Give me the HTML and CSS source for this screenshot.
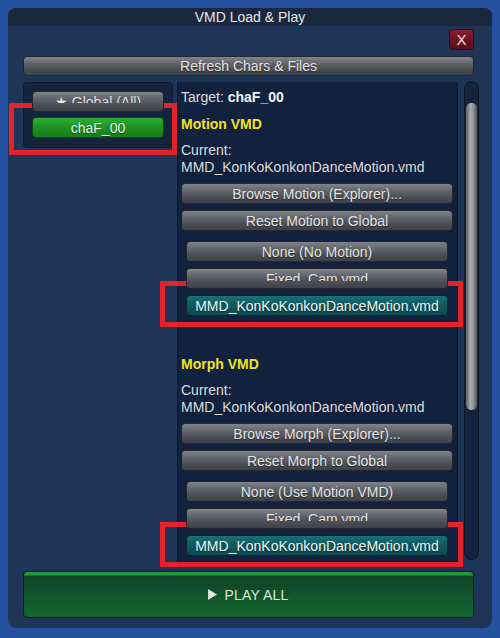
FILE: index.html
```html
<!DOCTYPE html>
<html>
<head>
<meta charset="utf-8">
<link rel="stylesheet" href="styles.css">
</head>
<body>
<div class="window">
  <div class="titlebar">VMD Load &amp; Play</div>
  <div class="close-row"><div class="btn-close">X</div></div>
  <div class="btn btn-refresh">Refresh Chars &amp; Files</div>
  <div class="main">
    <div class="left-panel">
      <div class="btn btn-global"><span class="clip clip12">★ Global (All)</span></div>
      <div class="btn btn-green">chaF_00</div>
    </div>
    <div class="right-panel">
      <div class="line">Target: <b class="strong">chaF_00</b></div>
      <div class="line heading">Motion VMD</div>
      <div class="line current">Current:</div>
      <div class="line">MMD_KonKoKonkonDanceMotion.vmd</div>
      <div class="btn btn-wide first">Browse Motion (Explorer)...</div>
      <div class="btn btn-wide">Reset Motion to Global</div>
      <div class="btn btn-item first-item">None (No Motion)</div>
      <div class="btn btn-item"><span class="clip clip13">Fixed_Cam.vmd</span></div>
      <div class="btn btn-item btn-teal">MMD_KonKoKonkonDanceMotion.vmd</div>

      <div class="line heading section">Morph VMD</div>
      <div class="line current">Current:</div>
      <div class="line">MMD_KonKoKonkonDanceMotion.vmd</div>
      <div class="btn btn-wide first">Browse Morph (Explorer)...</div>
      <div class="btn btn-wide">Reset Morph to Global</div>
      <div class="btn btn-item first-item">None (Use Motion VMD)</div>
      <div class="btn btn-item"><span class="clip clip13">Fixed_Cam.vmd</span></div>
      <div class="btn btn-item btn-teal">MMD_KonKoKonkonDanceMotion.vmd</div>
    </div>
    <div class="scroll-track"><div class="scroll-thumb"></div></div>
  </div>
  <div class="btn-play">
    <svg class="play-icon" width="9" height="11" viewBox="0 0 9 11"><path d="M0 0 L9 5.5 L0 11 Z" fill="#dfe8df"/></svg>
    <span>PLAY ALL</span>
  </div>
  <div class="mark mark-1"></div>
  <div class="mark mark-2"></div>
  <div class="mark mark-3"></div>
</div>
</body>
</html>
```

FILE: styles.css
```css
* { box-sizing: border-box; }
html, body { margin: 0; padding: 0; }
body {
  background: #2452a0;
  width: 500px;
  height: 638px;
  overflow: hidden;
  font-family: "Liberation Sans", Arial, sans-serif;
  font-size: 14px;
  color: #e2e2e2;
}
.window {
  position: relative;
  margin: 8px 0 0 8px;
  width: 484px;
  height: 620px;
  background: #1f3558;
  border-radius: 8px;
  padding: 0 18px 10px 15px;
  display: flex;
  flex-direction: column;
}
.titlebar {
  margin: 0 -18px 0 -15px;
  height: 18px;
  line-height: 18px;
  text-align: center;
  background: #1a283e;
  border-radius: 8px 8px 0 0;
  color: #e6e6e6;
}
.close-row {
  display: flex;
  justify-content: flex-end;
  margin-top: 3px;
  height: 21px;
}
.btn-close {
  width: 25px;
  height: 21px;
  line-height: 20px;
  text-align: center;
  color: #f0dde0;
  font-size: 15px;
  background: linear-gradient(#8a1e30, #6a1222 55%, #5a0e1c);
  border: 1px solid #3a0812;
  border-radius: 4px;
}
.btn {
  position: relative;
  z-index: 2;
  height: 21px;
  line-height: 20px;
  text-align: center;
  white-space: nowrap;
  color: #e4e4e4;
  text-shadow: 0 1px 1px rgba(0,0,0,0.45);
  background: linear-gradient(#80848a, #62666c 35%, #4a4e54 70%, #3e4247);
  border: 1px solid #23262b;
  border-radius: 4px;
  overflow: hidden;
}
.btn-refresh {
  margin-top: 6px;
  height: 20px;
  line-height: 18px;
}
.clip {
  display: block;
  overflow: hidden;
}
.clip12 { height: 11px; }
.clip13 { height: 12px; }
.main {
  margin-top: 6px;
  margin-right: -5px;
  height: 483px;
  display: flex;
  align-items: flex-start;
}
.main > * { flex-shrink: 0; }
.left-panel {
  width: 150px;
  height: 66px;
  background: #15243d;
  border: 1px solid #0e1a2d;
  border-radius: 4px;
  padding: 8px 8px 0 8px;
  display: flex;
  flex-direction: column;
  gap: 5px;
}
.btn-green {
  height: 21px;
  color: #e6f4e6;
  background: linear-gradient(#2eb134, #1f9424 45%, #177c1b);
  border-color: #0e4a10;
}
.right-panel {
  margin-left: 4px;
  width: 281px;
  height: 483px;
  background: #12223e;
  border-left: 1px solid #0c182c;
  border-right: 1px solid #0c182c;
  padding: 7px 4px 0 3px;
  overflow: hidden;
}
.line {
  line-height: 17px;
  height: 17px;
  white-space: nowrap;
  color: #dcdcdc;
}
.strong { color: #f2f2f2; }
.heading {
  margin-top: 10px;
  font-weight: bold;
  color: #f0e21e;
}
.heading.section { margin-top: 40px; }
.current { margin-top: 9px; }
.btn-wide { margin-top: 6px; }
.btn-wide.first { margin-top: 7px; }
.btn-item { margin: 6px 5px 0 5px; }
.btn-item.first-item { margin-top: 10px; }
.btn-teal {
  color: #eef6f6;
  background: linear-gradient(#1a7177, #11595f 45%, #0c4a50);
  border-color: #06282b;
}
.scroll-track {
  margin-left: 6px;
  margin-top: -1px;
  width: 15px;
  height: 479px;
  background: #14233f;
  border: 1px solid #0b1528;
  border-radius: 8px;
  padding: 21px 1px 0 1px;
}
.scroll-thumb {
  height: 307px;
  border-radius: 5px;
  background: linear-gradient(90deg, #5c5f63, #a9abae 40%, #9a9c9f 60%, #55585c);
}
.btn-play {
  margin-top: 6px;
  height: 47px;
  display: flex;
  align-items: center;
  justify-content: center;
  gap: 7px;
  color: #d9e6d9;
  letter-spacing: 0.2px;
  background: linear-gradient(#1f9a3a 0, #1f9a3a 3px, #0f4426 4px, #0f4a28 30%, #125d2c 70%, #136430);
  border: 1px solid #08240f;
  border-radius: 4px;
}
.play-icon { display: block; margin-top: -1px; }
.mark {
  position: absolute;
  z-index: 1;
  border: 5px solid #e3222b;
}
.mark-1 { left: 1px; top: 95px; width: 168px; height: 52px; }
.mark-2 { left: 152px; top: 273px; width: 303px; height: 46px; }
.mark-3 { left: 152px; top: 514px; width: 303px; height: 45px; }
```
